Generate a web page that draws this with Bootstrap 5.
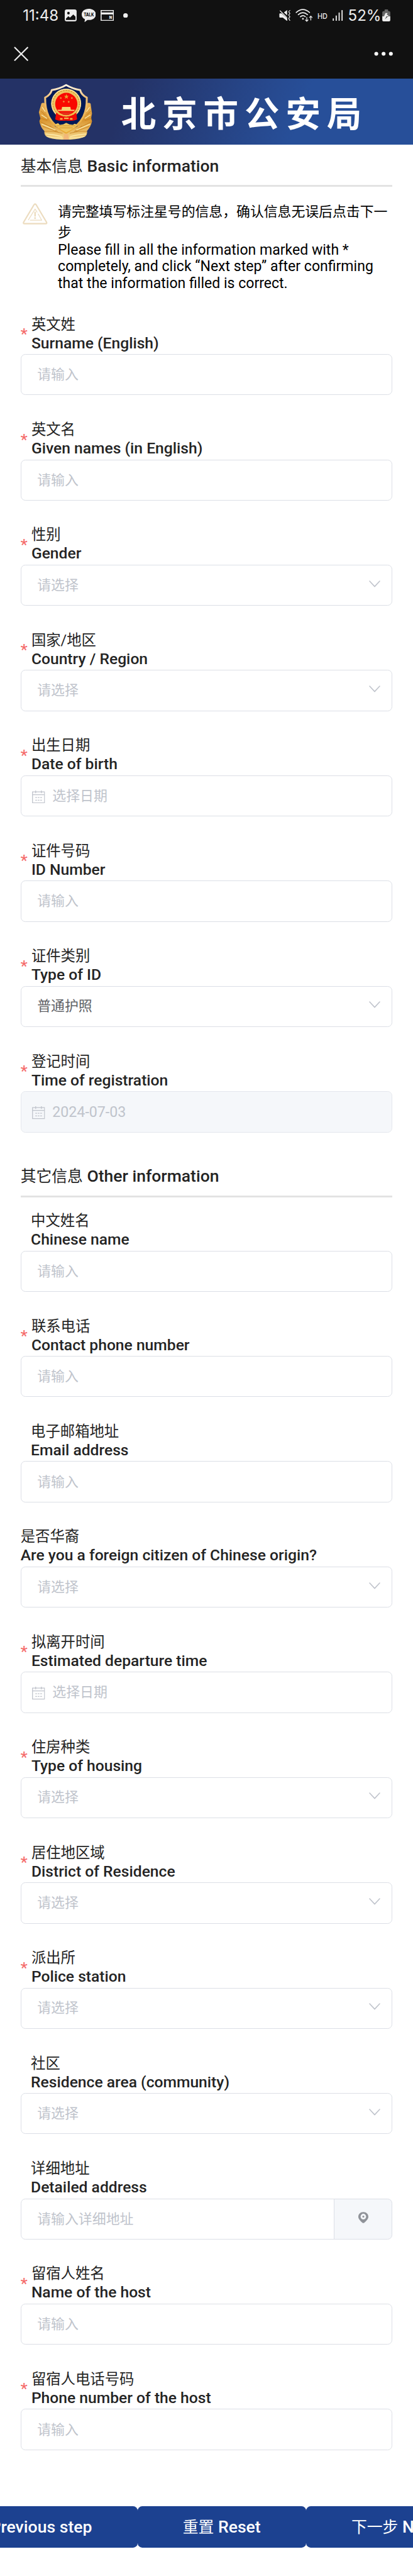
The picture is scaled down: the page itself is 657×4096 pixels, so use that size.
<!DOCTYPE html>
<html lang="zh-CN">
<head>
    <meta charset="UTF-8">
    <meta name="viewport" content="width=device-width, initial-scale=1.0">
    <title>北京市公安局</title>
    <link href="https://cdn.jsdelivr.net/npm/bootstrap@5.3.0/dist/css/bootstrap.min.css" rel="stylesheet">
    <style>
        body {
            font-family: Roboto, "Noto Sans CJK SC", sans-serif;
            color: #242424;
            background-color: #fff;
            min-height: 4096px;
            overflow-x: hidden;
        }
        svg {
            display: block;
            flex-shrink: 0;
        }

        /* phone chrome */
        .phone-top {
            background-color: #111;
            height: 124.6px;
            color: #eee;
            font-family: Inter, Roboto, sans-serif;
        }
        .status-row {
            height: 49px;
            padding-left: 36.2px;
            padding-right: 36px;
        }
        .clock, .percent {
            font-size: 24.1px;
            line-height: 49px;
        }
        .clock {
            width: 66.6px;
        }
        .percent {
            width: 54.5px;
            margin-left: 8px;
        }
        .dot-more {
            margin-left: 15px;
        }
        .app-row {
            height: 73px;
            padding-left: 21.5px;
            padding-right: 32px;
        }

        /* site banner */
        .banner {
            height: 105.8px;
            padding-left: 61.2px;
            background: linear-gradient(110deg, #243266 0%, #243266 30%, #274a90 64%, #274f99 72%, #274f99 100%);
        }
        .banner-title {
            font-family: "Noto Sans CJK SC", sans-serif;
            font-size: 55.5px;
            font-weight: 700;
            line-height: 1;
            letter-spacing: 9.9px;
            margin-left: 46px;
        }

        .page-body {
            padding: 0 32.7px;
        }
        .section-title {
            height: 67.1px;
            font-size: 26.5px;
            font-weight: 500;
            line-height: 30px;
            padding-top: 19px;
            border-bottom: 3.2px solid #e3e3e3;
            margin: 0;
        }
        .section-title span, .btn-step span {
            font-size: 24.8px;
            font-weight: 400;
            line-height: 1;
        }
        .section-other {
            height: 64.8px;
            padding-top: 15.8px;
            margin-bottom: 21.2px;
        }

        .notice {
            height: 143.3px;
            color: #000;
            margin-top: 23.3px;
            margin-bottom: 35.5px;
            padding-left: 3.3px;
            gap: 16.3px;
        }
        .notice-cn {
            font-size: 21.85px;
            line-height: 32.8px;
            margin-bottom: -1.4px;
        }
        .notice-en {
            font-size: 23.06px;
            line-height: 26.5px;
        }
        .notice svg {
            margin-top: 2px;
        }

        /* form items */
        .field {
            margin-bottom: 38.55px;
        }
        .field-label {
            height: 63.5px;
            font-size: 24.65px;
            font-weight: 500;
            line-height: 27px;
            padding-bottom: 4.5px;
        }
        .cn {
            font-size: 23.36px;
            font-weight: 400;
            line-height: 32px;
        }
        .required::before {
            content: "*";
            color: #f56c6c;
            width: 17.2px;
            flex-shrink: 0;
            padding-top: 3px;
        }
        .indent {
            padding-left: 16.4px;
        }
        .box {
            height: 65.4px;
            border: 1.4px solid #dcdfe6;
            border-radius: 7.3px;
            padding: 0 18.5px 0 25.5px;
            font-size: 21.9px;
            color: #c0c4cc;
            line-height: 62px;
        }
        .box::placeholder {
            color: #c0c4cc;
        }
        .box.picked {
            color: #606266;
        }
        .box.date {
            padding-left: 17.4px;
            gap: 11.6px;
        }
        .box.locked {
            font-size: 23.2px;
            background-color: #f5f7fa;
            border-color: #e4e7ed;
        }
        .box .arrow {
            margin-top: -5px;
        }
        .box .cal {
            margin-top: 3px;
        }
        .addon {
            width: 93.5px;
            background-color: #f5f7fa;
            border: 1.4px solid #dcdfe6;
            border-radius: 7.3px;
        }

        .steps {
            margin-top: 88.9px;
        }
        .btn-step {
            height: 65.9px;
            padding: 0 72.1px;
            border: 0;
            border-radius: 7.3px;
            background-color: #1c4190;
            color: #fff;
            font-size: 26.6px;
            font-weight: 500;
            line-height: 63px;
        }
    </style>
</head>
<body>

    <svg width="0" height="0" class="position-absolute">
        <symbol id="arrow" viewBox="0 0 18 11">
            <path d="M1 1 L9 9.6 L17 1" fill="none" stroke="#c0c4cc" stroke-width="1.6" stroke-linecap="round" stroke-linejoin="round"/>
        </symbol>
        <symbol id="cal" viewBox="0 0 34 34">
            <g fill="none" stroke="#c0c4cc" stroke-width="2.2">
                <path d="M1.2 3.6 H32.8 V32.6 H1.2 Z M1.2 11 H32.8"/>
                <path d="M9.5 0 V7 M24.5 0 V7"/>
                <path d="M8.5 18.5 h4.5 M15 18.5 h4.5 M21.5 18.5 h4.5 M8.5 25.5 h4.5 M15 25.5 h4.5 M21.5 25.5 h4.5"/>
            </g>
        </symbol>
    </svg>

    <div class="phone-top">
        <div class="status-row d-flex align-items-center">
            <div class="clock">11:48</div>
            <!-- gallery -->
            <svg width="18.9" height="18.9" viewBox="0 0 93 93">
                <rect width="93" height="93" rx="16" fill="#eee"/>
                <circle cx="29" cy="29" r="10" fill="#111"/>
                <path d="M9 77 V73 L28 53 L41 64 L67 39 L84 56 V77 Q84 83 78 83 H15 Q9 83 9 77Z" fill="#111"/>
            </svg>
            <!-- talk bubble -->
            <svg class="ms-2" width="22.5" height="21.3" viewBox="0 0 111 105">
                <path d="M55 0 C88 0 111 19 111 44 C111 70 88 88 58 88 Q49 88 45 87 L22 105 L25 81 C9 74 0 61 0 44 C0 19 24 0 55 0Z" fill="#eee"/>
                <text x="56" y="59" text-anchor="middle" font-size="36" font-weight="800" textLength="80" lengthAdjust="spacingAndGlyphs" fill="#111">TALK</text>
            </svg>
            <!-- browser window -->
            <svg width="21.3" height="17.6" viewBox="0 0 105 87" class="ms-2">
                <path d="M0 0 H105 V87 H0Z M8 8 V19 H97 V8Z M8 34 V78 H97 V34Z" fill="#eee" fill-rule="evenodd"/>
                <text x="78" y="71" text-anchor="middle" font-size="28" font-weight="900" fill="#eee">N</text>
            </svg>
            <svg class="dot-more" width="7.4" height="7.4" viewBox="0 0 10 10"><circle cx="5" cy="5" r="5" fill="#eee"/></svg>

            <!-- muted speaker -->
            <svg class="ms-auto" width="18" height="17.6" viewBox="92 79 89 87">
                <path d="M94 110 Q94 105 100 105 H112 L156 145 V166 L121 138 H100 Q94 138 94 132Z M130 97 L155 79 V121Z" fill="#eee"/>
                <path d="M100 85 L153 138" stroke="#eee" stroke-width="6" stroke-linecap="round"/>
                <path d="M177 82 q-9 7 -9 11 q0 4 6 8 q5 4 0 9 q-6 5 -6 9 q0 4 6 8 q5 4 0 9 q-6 5 -6 9 q0 4 9 17" fill="none" stroke="#eee" stroke-width="6" stroke-linecap="round"/>
            </svg>
            <!-- wifi with traffic arrows -->
            <svg class="ms-2" width="27.5" height="20.6" viewBox="222 70 136 102">
                <g fill="none" stroke="#eee" stroke-width="8" stroke-linecap="round">
                    <path d="M228 99 Q280 52 333 99"/>
                    <path d="M244 116 Q280 84 317 116"/>
                    <path d="M261 133 Q280 116 300 132"/>
                    <path d="M311 138 V167 M301 158 L311 168 L321 158 M343 159 V130 M332 139 L343 128 L354 139" stroke-width="6"/>
                </g>
                <circle cx="281" cy="149" r="7" fill="#eee"/>
            </svg>
            <svg width="16" height="16" viewBox="0 0 78 78" class="ms-2">
                <text x="0" y="61" font-size="58" font-weight="500" textLength="78" lengthAdjust="spacingAndGlyphs" fill="#eee">HD</text>
            </svg>
            <!-- signal bars -->
            <svg class="ms-2" width="16.4" height="17.6" viewBox="510 79 81 87">
                <path d="M516 148 V161 M539 125 V161 M562 102 V161 M585 83 V161" stroke="#eee" stroke-width="9" stroke-linecap="round"/>
            </svg>
            <div class="percent">52%</div>
            <!-- charging battery -->
            <svg width="13" height="19" viewBox="900 73 63 94">
                <path d="M918 82 V78 Q918 73 924 73 H940 Q946 73 946 78 V86 H953 Q963 86 963 96 V130 H900 V96 Q900 86 910 86 H918Z" fill="#666"/>
                <path d="M900 127 H963 V157 Q963 167 953 167 H910 Q900 167 900 157Z" fill="#eee"/>
                <path d="M925 102 H941 L936 117 H949 L943 127 H914Z" fill="#eee"/>
                <path d="M934 127 H944 L921 151Z" fill="#333"/>
            </svg>
        </div>
        <div class="app-row d-flex align-items-center justify-content-between">
            <svg width="23.4" height="23.4" viewBox="0 0 24 24"><path d="M1 1 L23 23 M23 1 L1 23" stroke="#eee" stroke-width="2.2"/></svg>
            <svg width="30" height="7" viewBox="0 0 30 7" fill="#fff">
                <circle cx="3.6" cy="3.5" r="3.05"/><circle cx="15.2" cy="3.5" r="3.05"/><circle cx="26.8" cy="3.5" r="3.05"/>
            </svg>
        </div>
    </div>

    <header class="banner d-flex align-items-center">
        <!-- police badge -->
        <svg width="85.6" height="89.6" viewBox="60 55 422 442">
            <defs>
                <linearGradient id="gold" x1="0" y1="0" x2="0" y2="1">
                    <stop offset="0" stop-color="#e9b45c"/>
                    <stop offset=".45" stop-color="#d9952f"/>
                    <stop offset="1" stop-color="#f6d98c"/>
                </linearGradient>
                <linearGradient id="rim" x1="0" y1="0" x2="0" y2="1">
                    <stop offset="0" stop-color="#fff3e0"/>
                    <stop offset=".25" stop-color="#f0c27c"/>
                    <stop offset="1" stop-color="#e9a936"/>
                </linearGradient>
            </defs>
            <path d="M84 210 Q98 200 112 212 L190 390 L278 440 L366 390 L440 212 Q456 200 470 212 L481 290 L474 325 L481 350 Q472 395 441 426 Q448 450 428 470 Q385 494 278 495 Q165 494 125 472 Q103 452 108 428 Q76 398 68 350 L76 328 L64 280Z" fill="url(#gold)"/>
            <g fill="none" stroke="#c77f1d" stroke-width="5" opacity=".75">
                <path d="M80 270 L112 300 M76 325 L130 345 M72 352 Q120 375 180 405 M108 430 Q170 425 250 445 M95 390 L200 430 M150 385 L220 440"/>
                <path d="M472 270 L440 300 M478 325 L424 345 M480 352 Q434 375 374 405 M440 430 Q386 425 306 445 M459 390 L354 430 M402 385 L334 440"/>
            </g>
            <g fill="none" stroke="#fff0b5" stroke-width="7" opacity=".85">
                <path d="M90 240 L115 275 M84 300 L128 328 M85 372 L195 418 M118 450 Q190 455 245 470 M130 470 Q200 485 250 480"/>
                <path d="M462 240 L437 275 M468 300 L424 328 M467 372 L357 418 M434 450 Q364 455 309 470 M422 470 Q354 485 304 480"/>
            </g>
            <path d="M278 66 Q330 96 388 105 Q398 145 440 164 C442 270 420 365 278 440 C136 365 112 270 113 164 Q154 145 166 105 Q226 96 278 66Z" fill="#021a57" stroke="url(#rim)" stroke-width="15" stroke-linejoin="round"/>
            <path d="M190 375 L215 364 L228 378 L255 374 L278 362 L304 374 L330 378 L345 370 L366 377 Q334 412 278 437 Q224 412 190 375Z" fill="#f0c65f"/>
            <path d="M205 385 L350 385 M225 402 L330 402" stroke="#cf9128" stroke-width="5"/>
            <circle cx="278" cy="212" r="118" fill="#edc362"/>
            <circle cx="278" cy="212" r="104" fill="none" stroke="#c98b2a" stroke-width="5" stroke-dasharray="12 9"/>
            <circle cx="278" cy="212" r="113" fill="none" stroke="#fbe7a4" stroke-width="6"/>
            <path d="M200 282 Q278 345 358 282 L364 335 Q340 350 278 345 Q215 350 192 335Z" fill="#f00b05"/>
            <circle cx="279" cy="214" r="87" fill="#f90800"/>
            <path d="M280 137 l5 14 h14 l-11 9 4 14 -12 -8 -12 8 4 -14 -11 -9 h14z" fill="#e8a431"/>
            <g fill="#eb8a3c"><circle cx="236" cy="168" r="7"/><circle cx="323" cy="168" r="7"/><circle cx="259" cy="196" r="7"/><circle cx="298" cy="198" r="7"/></g>
            <path d="M246 237 H311 L315 260 H346 L340 270 H216 L210 260 H242Z" fill="#f5d374"/>
            <path d="M205 270 Q278 338 352 270 L340 296 Q278 330 216 296Z" fill="#f1bd4b"/>
            <path d="M232 280 H325 L300 300 H256Z" fill="#e5311a"/>
            <path d="M230 331 H250 M262 327 H298 M308 331 H328" stroke="#f1bd4b" stroke-width="12"/>
            <path d="M262 450 H294 L300 494 H256Z" fill="#f2b777"/>
        </svg>
        <div class="banner-title text-white text-nowrap">北京市公安局</div>
    </header>

    <main class="page-body">
        <h2 class="section-title"><span>基本信息</span> Basic information</h2>

        <div class="notice d-flex align-items-start">
            <svg width="39.8" height="34" viewBox="0 0 199 170" fill="none" stroke="#ecdcbf" stroke-linecap="round" stroke-linejoin="round">
                <path d="M99 7 Q94 7 90 14 L8 151 Q3 163 14 163 H184 Q195 163 190 151 L108 14 Q104 7 99 7Z" stroke-width="11"/>
                <path d="M46 133 L99 47 L115 72 M124 86 L152 136 H61" stroke-width="6"/>
                <path d="M99 73 V101" stroke-width="12"/>
                <circle cx="99" cy="119" r="7.5" fill="#ecdcbf" stroke="none"/>
            </svg>
            <div class="text-nowrap">
                <div class="notice-cn">请完整填写标注星号的信息，确认信息无误后点击下一<br>步</div>
                <div class="notice-en">Please fill in all the information marked with *<br>completely, and click “Next step” after confirming<br>that the information filled is correct.</div>
            </div>
        </div>

        <form>
            <div class="field">
                <div class="field-label required d-flex align-items-center"><div><div class="cn">英文姓</div>Surname (English)</div></div>
                <input type="text" class="form-control box" placeholder="请输入">
            </div>
            <div class="field">
                <div class="field-label required d-flex align-items-center"><div><div class="cn">英文名</div>Given names (in English)</div></div>
                <input type="text" class="form-control box" placeholder="请输入">
            </div>
            <div class="field">
                <div class="field-label required d-flex align-items-center"><div><div class="cn">性别</div>Gender</div></div>
                <div class="form-control box d-flex align-items-center justify-content-between">请选择<svg class="arrow" width="18" height="11"><use href="#arrow"/></svg></div>
            </div>
            <div class="field">
                <div class="field-label required d-flex align-items-center"><div><div class="cn">国家/地区</div>Country / Region</div></div>
                <div class="form-control box d-flex align-items-center justify-content-between">请选择<svg class="arrow" width="18" height="11"><use href="#arrow"/></svg></div>
            </div>
            <div class="field">
                <div class="field-label required d-flex align-items-center"><div><div class="cn">出生日期</div>Date of birth</div></div>
                <div class="form-control box date d-flex align-items-center"><svg class="cal" width="20.6" height="20.6"><use href="#cal"/></svg>选择日期</div>
            </div>
            <div class="field">
                <div class="field-label required d-flex align-items-center"><div><div class="cn">证件号码</div>ID Number</div></div>
                <input type="text" class="form-control box" placeholder="请输入">
            </div>
            <div class="field">
                <div class="field-label required d-flex align-items-center"><div><div class="cn">证件类别</div>Type of ID</div></div>
                <div class="form-control box picked d-flex align-items-center justify-content-between">普通护照<svg class="arrow" width="18" height="11"><use href="#arrow"/></svg></div>
            </div>
            <div class="field">
                <div class="field-label required d-flex align-items-center"><div><div class="cn">登记时间</div>Time of registration</div></div>
                <div class="form-control box date locked d-flex align-items-center"><svg class="cal" width="20.6" height="20.6"><use href="#cal"/></svg>2024-07-03</div>
            </div>

            <h2 class="section-title section-other"><span>其它信息</span> Other information</h2>

            <div class="field">
                <div class="field-label indent"><div class="cn">中文姓名</div>Chinese name</div>
                <input type="text" class="form-control box" placeholder="请输入">
            </div>
            <div class="field">
                <div class="field-label required d-flex align-items-center"><div><div class="cn">联系电话</div>Contact phone number</div></div>
                <input type="text" class="form-control box" placeholder="请输入">
            </div>
            <div class="field">
                <div class="field-label indent"><div class="cn">电子邮箱地址</div>Email address</div>
                <input type="text" class="form-control box" placeholder="请输入">
            </div>
            <div class="field">
                <div class="field-label"><div class="cn">是否华裔</div>Are you a foreign citizen of Chinese origin?</div>
                <div class="form-control box d-flex align-items-center justify-content-between">请选择<svg class="arrow" width="18" height="11"><use href="#arrow"/></svg></div>
            </div>
            <div class="field">
                <div class="field-label required d-flex align-items-center"><div><div class="cn">拟离开时间</div>Estimated departure time</div></div>
                <div class="form-control box date d-flex align-items-center"><svg class="cal" width="20.6" height="20.6"><use href="#cal"/></svg>选择日期</div>
            </div>
            <div class="field">
                <div class="field-label required d-flex align-items-center"><div><div class="cn">住房种类</div>Type of housing</div></div>
                <div class="form-control box d-flex align-items-center justify-content-between">请选择<svg class="arrow" width="18" height="11"><use href="#arrow"/></svg></div>
            </div>
            <div class="field">
                <div class="field-label required d-flex align-items-center"><div><div class="cn">居住地区域</div>District of Residence</div></div>
                <div class="form-control box d-flex align-items-center justify-content-between">请选择<svg class="arrow" width="18" height="11"><use href="#arrow"/></svg></div>
            </div>
            <div class="field">
                <div class="field-label required d-flex align-items-center"><div><div class="cn">派出所</div>Police station</div></div>
                <div class="form-control box d-flex align-items-center justify-content-between">请选择<svg class="arrow" width="18" height="11"><use href="#arrow"/></svg></div>
            </div>
            <div class="field">
                <div class="field-label indent"><div class="cn">社区</div>Residence area (community)</div>
                <div class="form-control box d-flex align-items-center justify-content-between">请选择<svg class="arrow" width="18" height="11"><use href="#arrow"/></svg></div>
            </div>
            <div class="field">
                <div class="field-label indent"><div class="cn">详细地址</div>Detailed address</div>
                <div class="input-group flex-nowrap">
                    <input type="text" class="form-control box" placeholder="请输入详细地址">
                    <span class="input-group-text addon justify-content-center p-0">
                        <svg width="16" height="18" viewBox="0 0 38 42" class="mb-1">
                            <path d="M19 0 C30 0 38 8 38 18 C38 27 29 35 22 41 Q19 43 16 41 C9 35 0 27 0 18 C0 8 8 0 19 0Z M19 7 A10.5 10.5 0 1 0 19 28 A10.5 10.5 0 1 0 19 7Z" fill="#909399" fill-rule="evenodd"/>
                            <circle cx="19" cy="17.5" r="3.6" fill="#909399"/>
                        </svg>
                    </span>
                </div>
            </div>
            <div class="field">
                <div class="field-label required d-flex align-items-center"><div><div class="cn">留宿人姓名</div>Name of the host</div></div>
                <input type="text" class="form-control box" placeholder="请输入">
            </div>
            <div class="field mb-0">
                <div class="field-label required d-flex align-items-center"><div><div class="cn">留宿人电话号码</div>Phone number of the host</div></div>
                <input type="text" class="form-control box" placeholder="请输入">
            </div>
        </form>
    </main>

    <div class="steps d-flex justify-content-center overflow-hidden">
        <button type="button" class="btn btn-step flex-shrink-0 text-nowrap"><span>上一步</span> Previous step</button>
        <button type="button" class="btn btn-step flex-shrink-0 text-nowrap"><span>重置</span> Reset</button>
        <button type="button" class="btn btn-step flex-shrink-0 text-nowrap"><span>下一步</span> Next step</button>
    </div>

    <script src="https://cdn.jsdelivr.net/npm/bootstrap@5.3.0/dist/js/bootstrap.bundle.min.js"></script>
</body>
</html>
